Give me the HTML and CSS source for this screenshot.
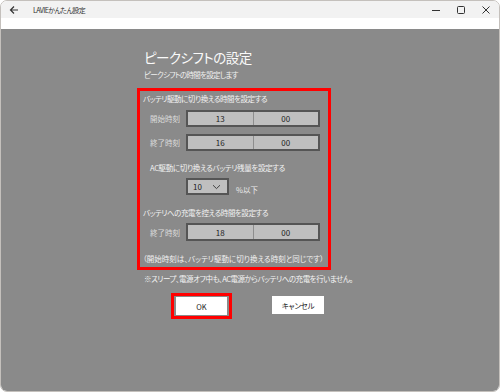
FILE: index.html
```html
<!DOCTYPE html>
<html lang="ja">
<head>
<meta charset="utf-8">
<link rel="stylesheet" href="styles.css">
</head>
<body>
<div class="window">
  <div class="titlebar">
    <svg class="back" width="10" height="10" viewBox="0 0 10 10"><path d="M9 5H1.5M5 1.5L1.5 5L5 8.5" fill="none" stroke="#333" stroke-width="1.2"/></svg>
    <span class="apptitle">LAVIEかんたん設定</span>
    <div class="controls">
      <svg width="10" height="10" viewBox="0 0 10 10"><path d="M1 5.5H9" stroke="#333" stroke-width="1"/></svg>
      <svg width="10" height="10" viewBox="0 0 10 10"><rect x="1.5" y="1.5" width="7" height="7" rx="1" fill="none" stroke="#333" stroke-width="1"/></svg>
      <svg width="10" height="10" viewBox="0 0 10 10"><path d="M1.5 1.5L8.5 8.5M8.5 1.5L1.5 8.5" stroke="#333" stroke-width="1"/></svg>
    </div>
  </div>
  <div class="strip"></div>
  <div class="content">
    <h1 class="heading">ピークシフトの設定</h1>
    <p class="sub">ピークシフトの時間を設定します</p>
    <div class="redbox">
      <p class="sec">バッテリ駆動に切り換える時間を設定する</p>
      <div class="row r1">
        <span class="label">開始時刻</span>
        <div class="time"><span>13</span><span>00</span></div>
      </div>
      <div class="row r2">
        <span class="label">終了時刻</span>
        <div class="time"><span>16</span><span>00</span></div>
      </div>
      <p class="sec ind ac">AC駆動に切り換えるバッテリ残量を設定する</p>
      <div class="droprow">
        <div class="drop"><span>10</span><svg width="9" height="6" viewBox="0 0 9 6"><path d="M1 1.2L4.5 4.6L8 1.2" fill="none" stroke="#333" stroke-width="0.9"/></svg></div>
        <span class="pct">%以下</span>
      </div>
      <p class="sec chg">バッテリへの充電を控える時間を設定する</p>
      <div class="row r3">
        <span class="label">終了時刻</span>
        <div class="time tall"><span>18</span><span>00</span></div>
      </div>
      <p class="sec note">（開始時刻は、バッテリ駆動に切り換える時刻と同じです）</p>
    </div>
    <p class="warn">※スリープ、電源オフ中も、AC電源からバッテリへの充電を行いません。</p>
    <div class="buttons">
      <div class="okwrap"><button class="btn">OK</button></div>
      <button class="btn cancel">キャンセル</button>
    </div>
  </div>
</div>
</body>
</html>
```

FILE: styles.css
```css
* { box-sizing: border-box; margin: 0; padding: 0; }
html, body { width: 500px; height: 392px; background: #fff; }
body {
  font-family: "Noto Sans CJK JP", "Noto Sans", sans-serif;
  font-feature-settings: "palt";
  overflow: hidden;
}
.window {
  width: 500px;
  height: 392px;
  border: 1px solid #c4c0bc;
  border-radius: 7px;
  overflow: hidden;
  display: flex;
  flex-direction: column;
}
.titlebar {
  height: 17px;
  background: #f2f2f2;
  display: flex;
  align-items: center;
  flex: none;
}
.back { margin-left: 8px; }
.apptitle {
  margin-left: 14px;
  font-size: 7px;
  color: #333;
  letter-spacing: -0.6px;
}
.controls {
  margin-left: auto;
  display: flex;
  gap: 15px;
  margin-right: 8px;
}
.strip { height: 11px; background: #fff; flex: none; }
.content {
  flex: 1;
  background: #8a8a8a;
  padding-left: 136px;
  padding-top: 18px;
  color: #f2f2f2;
}
.heading {
  font-size: 13.5px;
  font-weight: normal;
  line-height: 20px;
  margin-left: 7px;
  color: #fafafa;
  letter-spacing: -0.5px;
}
.sub {
  font-size: 7.5px;
  line-height: 12px;
  margin-left: 7px;
  margin-top: 2px;
  color: #f0f0f0;
  letter-spacing: -0.7px;
}
.redbox {
  margin-top: 7px;
  width: 194px;
  height: 182px;
  border: 3px solid #f00;
  padding: 2px 3px 0 3px;
}
.sec {
  font-size: 7.5px;
  line-height: 12px;
  color: #f2f2f2;
  white-space: nowrap;
  letter-spacing: -0.47px;
}
.row {
  display: flex;
  align-items: center;
  padding-left: 7px;
}
.r1 { margin-top: 5px; }
.r2 { margin-top: 7px; }
.label {
  width: 36px;
  font-size: 7.5px;
  color: #dcdcdc;
}
.time {
  width: 134px;
  height: 17px;
  background: #bfbfbf;
  border: 2px solid #555;
  display: flex;
  font-size: 8px;
  color: #222;
}
.time.tall { height: 18px; }
.time span {
  flex: 1;
  display: flex;
  align-items: center;
  justify-content: center;
}
.time span + span { border-left: 1px solid #8e8e8e; }
.ind { padding-left: 7px; }
.ac { margin-top: 11px; letter-spacing: -0.35px; }
.droprow {
  display: flex;
  align-items: flex-end;
  margin-top: 4px;
  padding-left: 43px;
}
.drop {
  width: 43px;
  height: 17px;
  background: #bfbfbf;
  border: 2px solid #555;
  display: flex;
  align-items: center;
  justify-content: space-between;
  padding: 0 6px 0 5px;
  font-size: 8px;
  color: #222;
}
.pct {
  font-size: 7.5px;
  color: #ececec;
  margin-left: 7px;
  line-height: 10px;
}
.chg { margin-top: 12px; }
.r3 { margin-top: 4px; }
.note { margin-top: 12px; color: #f0f0f0; letter-spacing: 0; }
.warn {
  font-size: 7.5px;
  line-height: 12px;
  margin-top: 3px;
  margin-left: 7px;
  color: #f4f4f4;
  letter-spacing: -0.45px;
  white-space: nowrap;
}
.buttons {
  display: flex;
  margin-top: 8px;
  margin-left: 34px;
  align-items: flex-start;
}
.okwrap {
  border: 3px solid #f00;
  padding: 1px;
  width: 61px;
  height: 26px;
}
.btn {
  width: 51px;
  height: 18px;
  background: #fff;
  border: none;
  font-family: "Noto Sans CJK JP", "Noto Sans", sans-serif;
  font-feature-settings: "palt";
  font-size: 7.5px;
  color: #222;
  display: block;
}
.okwrap .btn { margin: 0 auto; }
.cancel {
  margin-left: 40px;
  margin-top: 3px;
  width: 52px;
  letter-spacing: -0.3px;
}
```
